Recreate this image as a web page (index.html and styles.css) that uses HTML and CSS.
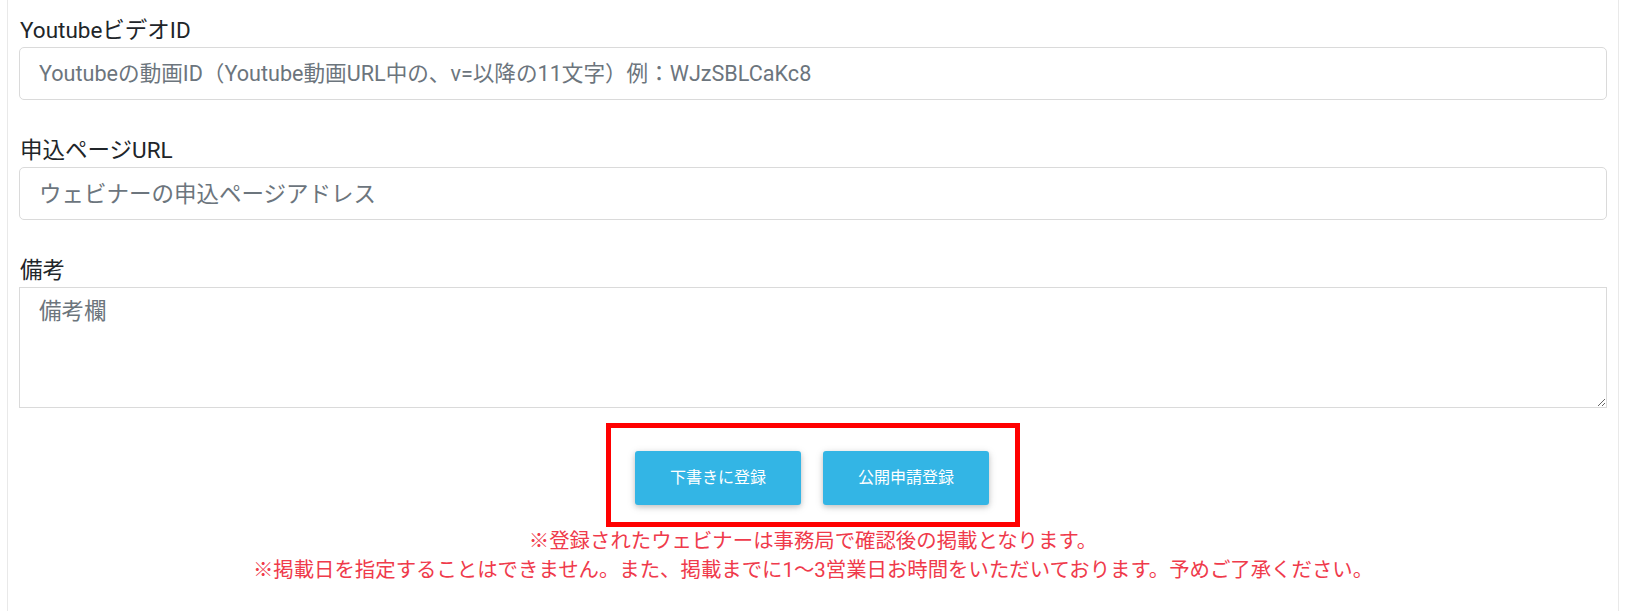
FILE: index.html
```html
<!DOCTYPE html>
<html lang="ja">
<head>
<meta charset="utf-8">
<title>ウェビナー登録</title>
<link rel="stylesheet" href="styles.css">
</head>
<body>
<div class="card">
  <form class="form">
    <div class="group">
      <label class="label" for="yt">YoutubeビデオID</label>
      <input class="field field-mixed" id="yt" type="text" placeholder="Youtubeの動画ID（Youtube動画URL中の、v=以降の11文字）例：WJzSBLCaKc8">
    </div>
    <div class="group">
      <label class="label" for="url">申込ページURL</label>
      <input class="field" id="url" type="text" placeholder="ウェビナーの申込ページアドレス">
    </div>
    <div class="group group-last">
      <label class="label" for="memo">備考</label>
      <textarea class="field area" id="memo" placeholder="備考欄"></textarea>
    </div>
    <div class="actions-row">
      <div class="actions">
        <button type="button" class="btn">下書きに登録</button>
        <button type="button" class="btn">公開申請登録</button>
      </div>
    </div>
    <p class="notice">※登録されたウェビナーは事務局で確認後の掲載となります。<br>※掲載日を指定することはできません。また、掲載までに1～3営業日お時間をいただいております。予めご了承ください。</p>
  </form>
</div>
</body>
</html>
```

FILE: styles.css
```css
html, body {
  margin: 0;
  padding: 0;
  background: #ffffff;
}

body {
  font-family: Roboto, "Noto Sans CJK JP", sans-serif;
  color: #212529;
  font-size: 20px;
}

.card {
  box-sizing: border-box;
  margin-left: 7px;
  width: 1612px;
  min-height: 611px;
  border-left: 1px solid #e9e9e9;
  border-right: 1px solid #e9e9e9;
  padding: 15px 11px 0 11px;
}

.form {
  display: flex;
  flex-direction: column;
}

.group {
  display: flex;
  flex-direction: column;
  margin-bottom: 35px;
}

.group-last {
  margin-bottom: 15px;
}

.label {
  display: block;
  font-size: 22.5px;
  line-height: 30px;
  height: 30px;
  padding-left: 1px;
  margin-bottom: 2px;
  color: #212529;
}

.field {
  box-sizing: border-box;
  display: block;
  width: 100%;
  height: 53px;
  padding: 0 19px;
  font-family: Roboto, "Noto Sans CJK JP", sans-serif;
  font-size: 22.5px;
  line-height: 30px;
  color: #495057;
  background: #ffffff;
  border: 1px solid #dadada;
  border-radius: 5px;
  outline: none;
}

.field-mixed {
  font-size: 21.6px;
}

.field::placeholder {
  color: #6c757d;
  opacity: 1;
}

.area {
  height: 121px;
  padding: 8px 19px;
  border-radius: 0;
  resize: vertical;
}

.actions-row {
  display: flex;
  justify-content: center;
}

.actions {
  display: flex;
  gap: 22px;
  border: 5px solid #ff0000;
  padding: 23px 26px 17px 24px;
}

.btn {
  box-sizing: border-box;
  width: 166px;
  height: 54px;
  padding: 0;
  border: none;
  border-radius: 3px;
  background: #33b5e5;
  color: #ffffff;
  font-family: Roboto, "Noto Sans CJK JP", sans-serif;
  font-size: 16px;
  line-height: 24px;
  box-shadow: 0 2px 5px 0 rgba(0, 0, 0, 0.16), 0 2px 10px 0 rgba(0, 0, 0, 0.12);
  cursor: pointer;
}

.notice {
  margin: 0;
  text-align: center;
  font-size: 20.4px;
  line-height: 29px;
  color: #ef3a4b;
}
```
